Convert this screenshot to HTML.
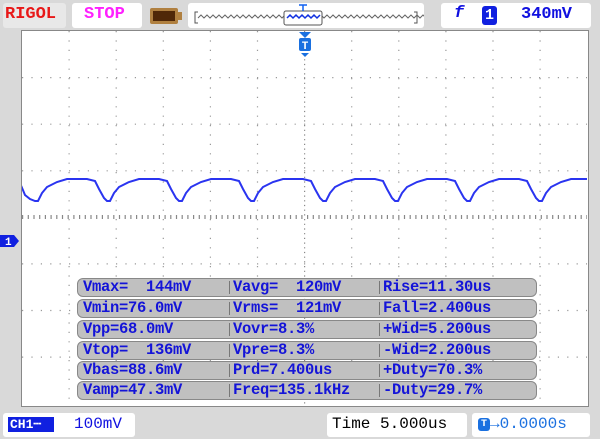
<!DOCTYPE html><html><head><style>
body{margin:0;width:600px;height:439px;background:#d9d9d9;position:relative;overflow:hidden;font-family:"Liberation Mono",monospace}
.b{position:absolute;background:#fff;border-radius:3px}
.t{position:absolute;white-space:pre;font-weight:bold}
.row{position:absolute;left:77px;width:458px;height:17px;background:#c0c0c0;border:1px solid #888;border-radius:6px}
.row span{position:absolute;top:-1px;color:#1414d8;font-size:15.5px;white-space:pre;letter-spacing:-0.3px;font-weight:bold}
.row i{position:absolute;top:2px;width:1px;height:13px;background:#777}
</style></head><body>
<div class="b" style="left:3px;top:3px;width:63px;height:25px;background:#e8e8e8"></div>
<div class="t" style="left:5px;top:5px;color:#e81818;font-size:17px">RIGOL</div>
<div class="b" style="left:72px;top:3px;width:70px;height:25px"></div>
<div class="t" style="left:84px;top:5px;color:#ff20ff;font-size:17px">STOP</div>
<div style="position:absolute;left:150px;top:8px;width:28px;height:16px;background:#b08040;border-radius:2px"></div>
<div style="position:absolute;left:153px;top:11px;width:22px;height:10px;background:#502808"></div>
<div style="position:absolute;left:178px;top:12px;width:4px;height:8px;background:#b08040"></div>
<div class="b" style="left:188px;top:3px;width:236px;height:25px"></div>
<svg style="position:absolute;left:188px;top:3px" width="236" height="25">
<path d="M10,9 H7 V20 H10" fill="none" stroke="#555"/><path d="M226,9 H229 V20 H226" fill="none" stroke="#555"/>
<path d="M10,15 l3,-3 l3,3 l3,-3 l3,3 l3,-3 l3,3 l3,-3 l3,3 l3,-3 l3,3 l3,-3 l3,3 l3,-3 l3,3 l3,-3 l3,3 l3,-3 l3,3 l3,-3 l3,3 l3,-3 l3,3 l3,-3 l3,3 l3,-3 l3,3 l3,-3 l3,3 l3,-3 l3,3 l3,-3 l3,3 l3,-3 l3,3 l3,-3 l3,3 l3,-3 l3,3 l3,-3 l3,3 l3,-3 l3,3 l3,-3 l3,3 l3,-3 l3,3 l3,-3 l3,3 l3,-3 l3,3 l3,-3 l3,3 l3,-3 l3,3 l3,-3 l3,3 l3,-3 l3,3 l3,-3 l3,3 l3,-3 l3,3 l3,-3 l3,3 l3,-3 l3,3 l3,-3 l3,3 l3,-3 l3,3 l3,-3 l3,3 l3,-3 l3,3 l3,-3 l3,3" fill="none" stroke="#666"/>
<rect x="96" y="8" width="38" height="14" rx="2" fill="#fff" stroke="#555"/>
<path d="M99,15 l3,-3 l3,3 l3,-3 l3,3 l3,-3 l3,3 l3,-3 l3,3 l3,-3 l3,3 l3,-3" fill="none" stroke="#1030e0" stroke-width="1.5"/>
<path d="M111,2 h8 M115,2 v6" stroke="#1060f0" stroke-width="1.5"/>
</svg>
<div class="b" style="left:441px;top:3px;width:150px;height:25px"></div>
<div class="t" style="left:454px;top:4px;color:#1010e0;font-size:17px;font-style:italic">f</div>
<div style="position:absolute;left:482px;top:6px;width:15px;height:19px;background:#1020e0;border-radius:3px;color:#fff;font:bold 15px 'Liberation Mono';text-align:center;line-height:19px">1</div>
<div class="t" style="left:521px;top:5px;color:#1010e0;font-size:17px">340mV</div>
<div style="position:absolute;left:21px;top:30px;width:566px;height:375px;background:#fff;border:1px solid #888"></div>
<svg style="position:absolute;left:0;top:0" width="600" height="439">
<defs><clipPath id="c"><rect x="22" y="31" width="565" height="374"/></clipPath></defs>
<g clip-path="url(#c)">
<g stroke="#999" stroke-width="1.2" stroke-dasharray="1.2 8.2">
<line x1="22" y1="77.6" x2="587" y2="77.6"/><line x1="22" y1="124.2" x2="587" y2="124.2"/><line x1="22" y1="170.8" x2="587" y2="170.8"/><line x1="22" y1="263.9" x2="587" y2="263.9"/><line x1="22" y1="310.5" x2="587" y2="310.5"/><line x1="22" y1="357.1" x2="587" y2="357.1"/>
<line y1="31" y2="405" x1="69.1" x2="69.1"/><line y1="31" y2="405" x1="116.2" x2="116.2"/><line y1="31" y2="405" x1="163.3" x2="163.3"/><line y1="31" y2="405" x1="210.4" x2="210.4"/><line y1="31" y2="405" x1="257.5" x2="257.5"/><line y1="31" y2="405" x1="351.7" x2="351.7"/><line y1="31" y2="405" x1="398.8" x2="398.8"/><line y1="31" y2="405" x1="445.9" x2="445.9"/><line y1="31" y2="405" x1="493" x2="493"/><line y1="31" y2="405" x1="540.1" x2="540.1"/>
</g>
<g stroke="#888" stroke-width="1.2" stroke-dasharray="1.2 3.5">
<line x1="22" y1="217" x2="587" y2="217" stroke-dasharray="1.2 4.5" stroke-width="4"/>
<line x1="304.6" y1="31" x2="304.6" y2="405"/>
</g>
<path d="M20,183 L25,195 L30,199 L35,201 l3,0 l4,-8 l5,-6 l10,-5 l10,-3 l20,0 l8,2 l4,8 l5,9 l3,3 l3,0 l4,-8 l5,-6 l10,-5 l10,-3 l20,0 l8,2 l4,8 l5,9 l3,3 l3,0 l4,-8 l5,-6 l10,-5 l10,-3 l20,0 l8,2 l4,8 l5,9 l3,3 l3,0 l4,-8 l5,-6 l10,-5 l10,-3 l20,0 l8,2 l4,8 l5,9 l3,3 l3,0 l4,-8 l5,-6 l10,-5 l10,-3 l20,0 l8,2 l4,8 l5,9 l3,3 l3,0 l4,-8 l5,-6 l10,-5 l10,-3 l20,0 l8,2 l4,8 l5,9 l3,3 l3,0 l4,-8 l5,-6 l10,-5 l10,-3 l20,0 l8,2 l4,8 l5,9 l3,3 l3,0 l4,-8 l5,-6 l10,-5 l10,-3 l20,0 l8,2 l4,8 l5,9 l3,3 l3,0 l4,-8 l5,-6 l10,-5" fill="none" stroke="#2a34f0" stroke-width="2"/>
</g>
<path d="M299,32 h12 l-6,6 z" fill="#1a70e0"/>
<rect x="299" y="38" width="12" height="13" rx="2" fill="#1a70e0"/>
<path d="M301,53 l4,4 l4,-4 z" fill="#1a70e0"/>
<text x="305" y="49" fill="#fff" font-family="Liberation Mono" font-weight="bold" font-size="11" text-anchor="middle">T</text>
<path d="M0,235 h14 l5,6 l-5,6 h-14 z" fill="#1020e0"/>
<text x="5" y="245" fill="#fff" font-family="Liberation Mono" font-weight="bold" font-size="11">1</text>
</svg>
<div class="row" style="top:278px"><span style="left:5px">Vmax=  144mV</span><i style="left:151px"></i><span style="left:155px">Vavg=  120mV</span><i style="left:301px"></i><span style="left:305px">Rise=11.30us</span></div>
<div class="row" style="top:299px"><span style="left:5px">Vmin=76.0mV</span><i style="left:151px"></i><span style="left:155px">Vrms=  121mV</span><i style="left:301px"></i><span style="left:305px">Fall=2.400us</span></div>
<div class="row" style="top:320px"><span style="left:5px">Vpp=68.0mV</span><i style="left:151px"></i><span style="left:155px">Vovr=8.3%</span><i style="left:301px"></i><span style="left:305px">+Wid=5.200us</span></div>
<div class="row" style="top:341px"><span style="left:5px">Vtop=  136mV</span><i style="left:151px"></i><span style="left:155px">Vpre=8.3%</span><i style="left:301px"></i><span style="left:305px">-Wid=2.200us</span></div>
<div class="row" style="top:361px"><span style="left:5px">Vbas=88.6mV</span><i style="left:151px"></i><span style="left:155px">Prd=7.400us</span><i style="left:301px"></i><span style="left:305px">+Duty=70.3%</span></div>
<div class="row" style="top:381px"><span style="left:5px">Vamp=47.3mV</span><i style="left:151px"></i><span style="left:155px">Freq=135.1kHz</span><i style="left:301px"></i><span style="left:305px">-Duty=29.7%</span></div>
<div class="b" style="left:3px;top:413px;width:132px;height:24px"></div>
<div style="position:absolute;left:8px;top:417px;width:44px;height:15px;background:#1020e0;color:#fff;font:bold 13px 'Liberation Mono';line-height:15px;padding-left:2px">CH1<span style="letter-spacing:-2px">┄</span></div>
<div class="t" style="left:74px;top:415px;color:#1010e0;font-size:16px;font-weight:normal">100mV</div>
<div class="b" style="left:327px;top:413px;width:140px;height:24px"></div>
<div class="t" style="left:332px;top:415px;color:#000;font-size:16px;font-weight:normal">Time 5.000us</div>
<div class="b" style="left:472px;top:413px;width:118px;height:24px"></div>
<div style="position:absolute;left:478px;top:418px;width:12px;height:13px;background:#1a70e0;border-radius:3px;color:#fff;font:bold 10px 'Liberation Mono';text-align:center;line-height:13px">T</div>
<div class="t" style="left:490px;top:415px;color:#1a70e0;font-size:16px;font-weight:normal">→0.0000s</div>
</body></html>
